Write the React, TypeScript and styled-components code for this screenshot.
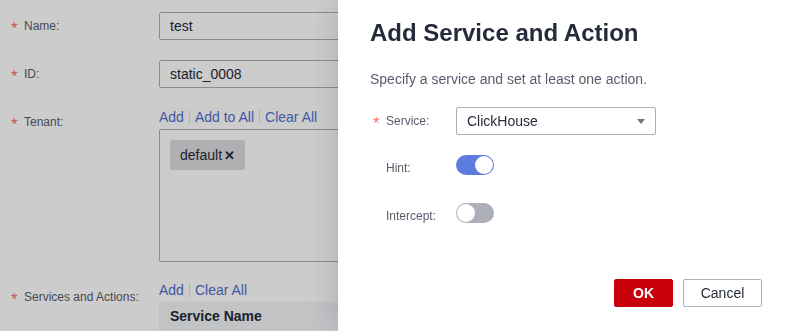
import styled, { createGlobalStyle } from "styled-components";

const GlobalStyle = createGlobalStyle`
  html, body {
    margin: 0;
    padding: 0;
    background: #ffffff;
    font-family: "Liberation Sans", Arial, sans-serif;
    overflow: hidden;
  }
`;

const PageSC = styled.main`
  padding: 12px 0 0 12px;
  width: 760px;
  height: 331px;
  box-sizing: border-box;
  color: #252b3a;
`;

const FormRowSC = styled.div<{ $top?: number }>`
  display: grid;
  grid-template-columns: 147px 400px;
  align-items: start;
  margin-top: ${(p) => p.$top ?? 0}px;
`;

const LabelSC = styled.div<{ $pad?: number }>`
  display: flex;
  align-items: center;
  height: ${(p) => (p.$pad ? "20px" : "28px")};
  padding-top: ${(p) => p.$pad ?? 0}px;
  font-size: 12px;
  color: #575d6c;
`;

const StarSC = styled.span`
  display: inline-block;
  width: 12px;
  color: #f66f6a;
  font-family: "Liberation Sans", sans-serif;
  font-size: 17px;
  line-height: 12px;
  padding-top: 6px;
  margin-left: -1px;
  margin-right: 1px;
`;

const TextInputSC = styled.div`
  height: 28px;
  box-sizing: border-box;
  border: 1px solid #adb0b8;
  border-radius: 2px;
  padding: 0 10px;
  display: flex;
  align-items: center;
  font-size: 14px;
  color: #252b3a;
`;

const LinkBarSC = styled.div`
  display: flex;
  align-items: center;
  height: 22px;
  font-size: 14px;
`;

const LinkSC = styled.span`
  color: #526ecc;
  cursor: pointer;
`;

const SepSC = styled.span`
  width: 1px;
  height: 14px;
  margin: 0 5px;
  background: #dfe1e6;
`;

const TagBoxSC = styled.div`
  margin-top: 1px;
  height: 133px;
  box-sizing: border-box;
  border: 1px solid #adb0b8;
  border-radius: 2px;
  padding: 10px;
`;

const TagSC = styled.span`
  display: inline-flex;
  align-items: center;
  height: 30px;
  padding: 0 10px;
  border-radius: 2px;
  background: #dcdde0;
  font-size: 14px;
  color: #252b3a;
`;

const TagCloseSC = styled.span`
  font-weight: bold;
  margin-left: 2px;
  font-size: 13px;
`;

const TableHeadSC = styled.div`
  margin-top: 1px;
  height: 28px;
  background: #f2f4f7;
  display: flex;
  align-items: center;
  padding-left: 11px;
  font-size: 14px;
  font-weight: bold;
  color: #252b3a;
`;

const MaskSC = styled.div`
  position: fixed;
  inset: 0;
  background: rgba(0, 0, 0, 0.2);
`;

const DrawerSC = styled.aside`
  position: fixed;
  top: 0;
  right: 0;
  width: 453px;
  height: 100%;
  box-sizing: border-box;
  background: #ffffff;
  box-shadow: -4px 0 28px rgba(0, 0, 0, 0.14);
  padding: 17px 29px 24px 32px;
  display: flex;
  flex-direction: column;
`;

const TitleSC = styled.h2`
  margin: 0;
  font-size: 24px;
  line-height: 32px;
  font-weight: bold;
  color: #252b3a;
`;

const SubTitleSC = styled.p`
  margin: 20px 0 0;
  font-size: 14px;
  line-height: 20px;
  color: #575d6c;
`;

const DrawerRowSC = styled.div<{ $top: number }>`
  display: flex;
  align-items: flex-start;
  margin-top: ${(p) => p.$top}px;
`;

const DrawerLabelSC = styled.div`
  width: 86px;
  height: 28px;
  padding-left: 4px;
  box-sizing: border-box;
  display: flex;
  align-items: center;
  font-size: 12px;
  color: #575d6c;
`;

const SelectSC = styled.div`
  width: 200px;
  height: 28px;
  box-sizing: border-box;
  border: 1px solid #adb0b8;
  border-radius: 2px;
  padding: 0 10px;
  display: flex;
  align-items: center;
  justify-content: space-between;
  font-size: 14px;
  color: #252b3a;
`;

const CaretSC = styled.span`
  width: 0;
  height: 0;
  border-left: 4px solid transparent;
  border-right: 4px solid transparent;
  border-top: 5px solid #71757f;
`;

const SwitchSC = styled.span<{ $on?: boolean }>`
  position: relative;
  display: inline-block;
  width: 38px;
  height: 20px;
  margin-top: 1px;
  border-radius: 10px;
  background: ${(p) => (p.$on ? "#5e7ce0" : "#adb0b8")};

  &::after {
    content: "";
    position: absolute;
    top: 1px;
    left: ${(p) => (p.$on ? "19px" : "1px")};
    width: 18px;
    height: 18px;
    border-radius: 50%;
    background: #ffffff;
  }
`;

const FooterSC = styled.div`
  margin-top: auto;
  display: flex;
  justify-content: flex-end;
  gap: 10px;
`;

const ButtonSC = styled.button<{ $primary?: boolean }>`
  height: 28px;
  min-width: ${(p) => (p.$primary ? "59px" : "79px")};
  box-sizing: border-box;
  border-radius: 2px;
  border: 1px solid ${(p) => (p.$primary ? "#c7000b" : "#adb0b8")};
  background: ${(p) => (p.$primary ? "#c7000b" : "#ffffff")};
  color: ${(p) => (p.$primary ? "#ffffff" : "#252b3a")};
  font-family: "Liberation Sans", Arial, sans-serif;
  font-size: 14px;
  font-weight: ${(p) => (p.$primary ? "bold" : "normal")};
  cursor: pointer;
`;

export default function App() {
  return (
    <>
      <GlobalStyle />
      <PageSC>
        <FormRowSC>
          <LabelSC>
            <StarSC>*</StarSC>Name:
          </LabelSC>
          <TextInputSC>test</TextInputSC>
        </FormRowSC>
        <FormRowSC $top={20}>
          <LabelSC>
            <StarSC>*</StarSC>ID:
          </LabelSC>
          <TextInputSC>static_0008</TextInputSC>
        </FormRowSC>
        <FormRowSC $top={18}>
          <LabelSC $pad={6}>
            <StarSC>*</StarSC>Tenant:
          </LabelSC>
          <div>
            <LinkBarSC>
              <LinkSC>Add</LinkSC>
              <SepSC />
              <LinkSC>Add to All</LinkSC>
              <SepSC />
              <LinkSC>Clear All</LinkSC>
            </LinkBarSC>
            <TagBoxSC>
              <TagSC>
                default<TagCloseSC>✕</TagCloseSC>
              </TagSC>
            </TagBoxSC>
          </div>
        </FormRowSC>
        <FormRowSC $top={17}>
          <LabelSC $pad={8}>
            <StarSC>*</StarSC>Services and Actions:
          </LabelSC>
          <div>
            <LinkBarSC>
              <LinkSC>Add</LinkSC>
              <SepSC />
              <LinkSC>Clear All</LinkSC>
            </LinkBarSC>
            <TableHeadSC>Service Name</TableHeadSC>
          </div>
        </FormRowSC>
      </PageSC>
      <MaskSC />
      <DrawerSC>
        <TitleSC>Add Service and Action</TitleSC>
        <SubTitleSC>Specify a service and set at least one action.</SubTitleSC>
        <DrawerRowSC $top={18}>
          <DrawerLabelSC>
            <StarSC>*</StarSC>Service:
          </DrawerLabelSC>
          <SelectSC>
            ClickHouse
            <CaretSC />
          </SelectSC>
        </DrawerRowSC>
        <DrawerRowSC $top={19}>
          <DrawerLabelSC>
            <StarSC />
            Hint:
          </DrawerLabelSC>
          <SwitchSC $on />
        </DrawerRowSC>
        <DrawerRowSC $top={20}>
          <DrawerLabelSC>
            <StarSC />
            Intercept:
          </DrawerLabelSC>
          <SwitchSC />
        </DrawerRowSC>
        <FooterSC>
          <ButtonSC $primary>OK</ButtonSC>
          <ButtonSC>Cancel</ButtonSC>
        </FooterSC>
      </DrawerSC>
    </>
  );
}
